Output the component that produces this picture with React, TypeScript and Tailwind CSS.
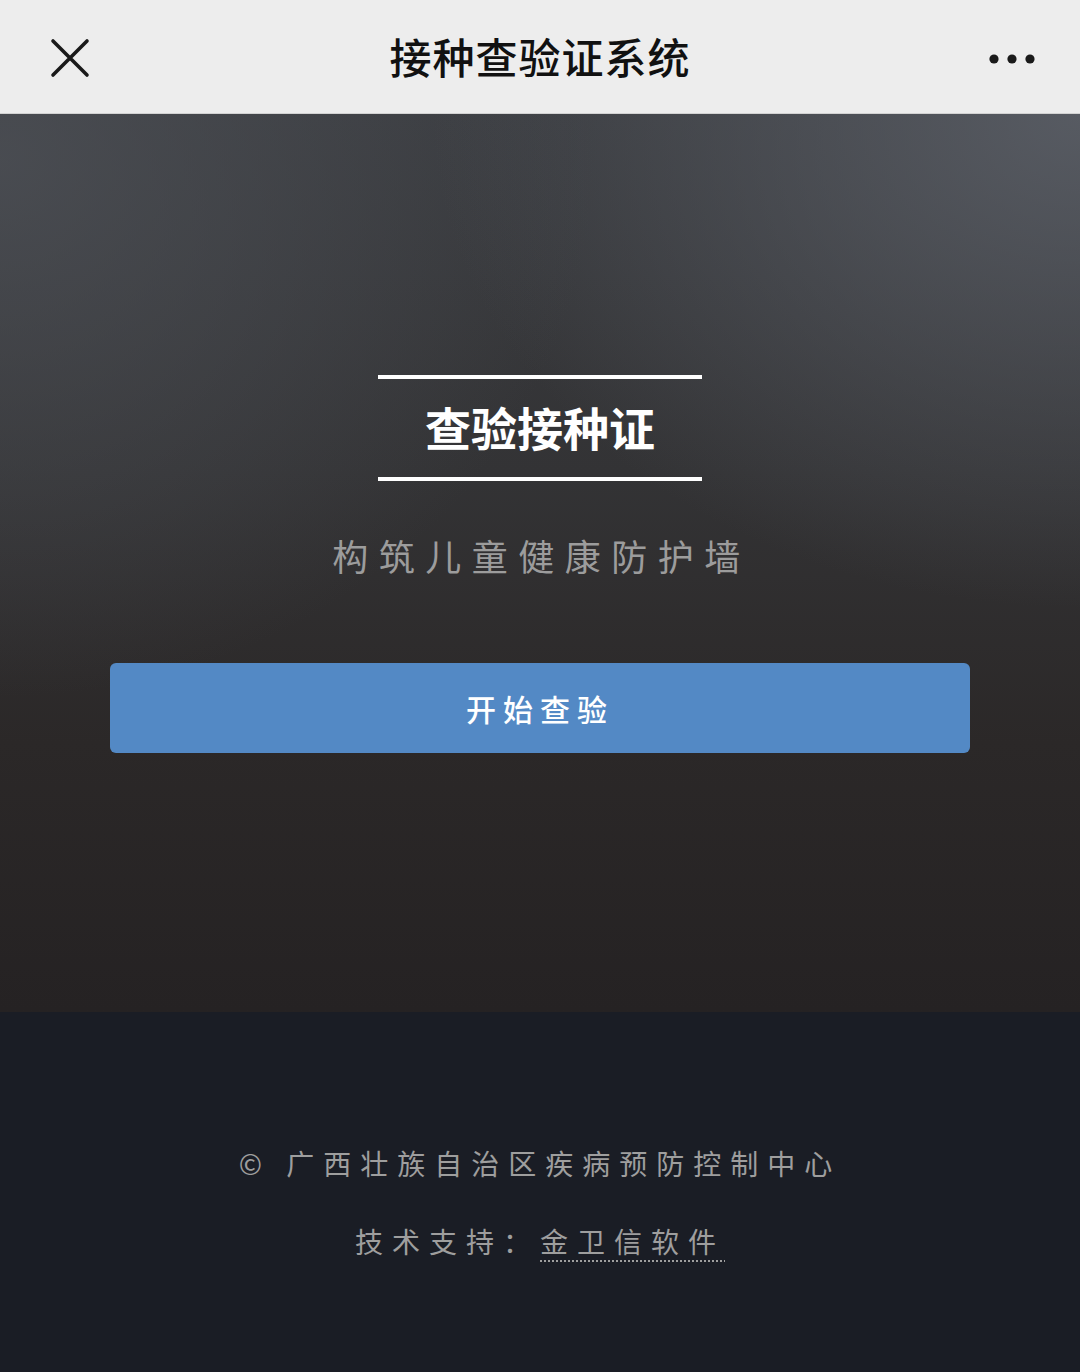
import React from "react"

const cjk = "font-['Noto_Sans_CJK_SC','Noto_Sans',sans-serif]"

function CloseIcon() {
  return (
    <svg width="40" height="40" viewBox="0 0 40 40" fill="none">
      <path d="M3 3 L37 37 M37 3 L3 37" stroke="#1a1a1a" strokeWidth="3.6" strokeLinecap="round" />
    </svg>
  )
}

function MoreIcon() {
  return (
    <svg width="48" height="12" viewBox="0 0 48 12">
      <circle cx="6" cy="6" r="4.6" fill="#1a1a1a" />
      <circle cx="24" cy="6" r="4.6" fill="#1a1a1a" />
      <circle cx="42" cy="6" r="4.6" fill="#1a1a1a" />
    </svg>
  )
}

export default function App() {
  return (
    <div className={`w-[1080px] h-[1372px] flex flex-col ${cjk}`}>
      <header className="h-[114px] shrink-0 bg-[#ededed] border-b border-[#d2d2d2] relative flex items-center justify-center">
        <div className="absolute left-[50px] top-[38px]">
          <CloseIcon />
        </div>
        <h1 className="text-[42px] leading-none font-medium text-[#111] tracking-[1px] -mt-[2px]">
          接种查验证系统
        </h1>
        <div className="absolute right-[44px] top-[53px]">
          <MoreIcon />
        </div>
      </header>

      <section className="h-[898px] shrink-0 flex flex-col items-center pt-[261px] bg-[radial-gradient(ellipse_60%_55%_at_100%_0%,rgba(92,96,104,0.85),transparent),radial-gradient(ellipse_55%_60%_at_0%_5%,rgba(78,81,87,0.75),transparent),linear-gradient(180deg,#3a3c40_0%,#333335_40%,#2b2828_70%,#252223_100%)]">
        <div className="w-[324px] h-[106px] border-y-4 border-white flex items-center justify-center">
          <h2 className="text-[46px] leading-none font-bold text-white -mt-[5px]">查验接种证</h2>
        </div>
        <p className="mt-[56px] text-[36px] leading-none text-[#9c9c9c] tracking-[10.5px] pl-[3px]">
          构筑儿童健康防护墙
        </p>
        <button className="mt-[90px] w-[860px] h-[90px] rounded-[6px] bg-[#5389c5] text-white text-[30px] font-medium tracking-[7px] flex items-center justify-center">
          开始查验
        </button>
      </section>

      <footer className="flex-1 bg-[#1a1d25] flex flex-col items-center pt-[137px] text-[#9e9e9e] text-[28px] leading-none tracking-[9px]">
        <p>© 广西壮族自治区疾病预防控制中心</p>
        <p className="mt-[50px]">
          技术支持：
          <span className="underline decoration-dotted decoration-2 underline-offset-[7px] decoration-[#9e9e9e]">金卫信软件</span>
        </p>
      </footer>
    </div>
  )
}
